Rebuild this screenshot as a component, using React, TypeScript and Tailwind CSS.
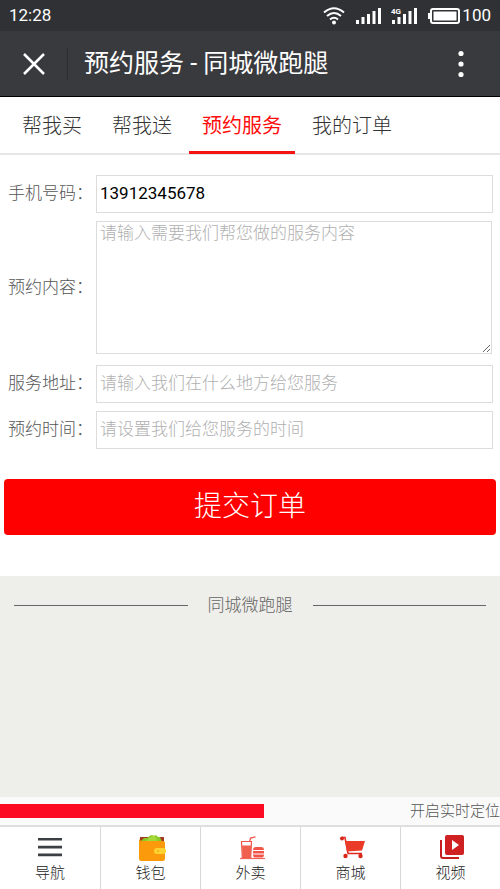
import { useState } from "react";

const tabs = ["帮我买", "帮我送", "预约服务", "我的订单"];

const fieldClass =
  "block min-w-0 flex-1 border border-[#dcdcdc] bg-white px-[3px] text-black outline-none placeholder:font-light placeholder:text-[#b0b0b0]";

const MenuIcon = () => (
  <svg width="30" height="30" viewBox="0 0 30 30" fill="#3c4045">
    <path d="M3 6h24v2.600H3zM3 13.800h24v2.600H3zM3 21.600h24v2.600H3z" />
  </svg>
);

const WalletIcon = () => (
  <svg width="30" height="30" viewBox="0 0 30 30">
    <path d="M4 5h24v6H4z" fill="#a33a22" />
    <path d="M5 9l3-3 3 0 4-3 3 1 2-1 2 2 2 0 2 5z" fill="#8ac926" />
    <path d="M10 9l7-6 3 2 1 4z" fill="#a5d93a" />
    <path d="M3 6q0 3 4 3h20q2 0 2 2v15q0 3-2 3H5q-2 0-2-3z" fill="#fb9a0a" />
    <rect x="18" y="16" width="12" height="6" rx="3" fill="#fdd331" />
    <circle cx="22" cy="19" r="1.200" fill="#f4b71b" />
  </svg>
);

const TakeoutIcon = () => (
  <svg width="30" height="30" viewBox="0 0 30 30" fill="none">
    <path d="M12.500 14l2-8 5-1.200" stroke="#f2564a" strokeWidth="1.300" />
    <path d="M5.500 9.500h10l-.8 16H6.300z" fill="#fff" stroke="#f2564a" strokeWidth="1.200" />
    <path d="M6 13.500h9.300l-.6 12H6.500z" fill="#f0604f" />
    <path d="M17 18q0-3 3-3h5q3 0 3 3zM17 19h11v2.500H17zM17 22.500h11q0 3-2 3h-7q-2 0-2-3z" fill="#f2564a" />
    <path d="M4 26.500h25" stroke="#f2665a" strokeWidth="1.200" />
  </svg>
);

const CartIcon = () => (
  <svg width="30" height="30" viewBox="0 0 30 30">
    <circle cx="6" cy="6.500" r="2" fill="#d9271b" />
    <path d="M6 5.500h3l3 16h14" fill="none" stroke="#e0281c" strokeWidth="1.500" />
    <path d="M9 9h20l-3 9.500-15 1z" fill="#ea3a28" />
    <circle cx="9.500" cy="24" r="2.200" fill="#d9271b" />
    <circle cx="24.500" cy="24" r="2.200" fill="#d9271b" />
  </svg>
);

const VideoIcon = () => (
  <svg width="30" height="30" viewBox="0 0 30 30">
    <path d="M5 8v16q0 2 2 2h16" fill="none" stroke="#c81d1f" strokeWidth="2" />
    <rect x="9" y="3" width="19" height="20" rx="2" fill="#cf2022" />
    <path d="M16 8l7 5-7 5z" fill="#fff" />
  </svg>
);

const navItems = [
  { label: "导航", icon: MenuIcon },
  { label: "钱包", icon: WalletIcon },
  { label: "外卖", icon: TakeoutIcon },
  { label: "商城", icon: CartIcon },
  { label: "视频", icon: VideoIcon },
];

const SignalBars = ({ network }: { network?: string }) => (
  <svg width="27" height="20" viewBox="0 0 27 20" fill="#fff">
    <rect x="1" y="14" width="3" height="4" />
    <rect x="6.500" y="11" width="3" height="7" />
    <rect x="12" y="8" width="3" height="10" />
    <rect x="17.500" y="5" width="3" height="13" />
    <rect x="23" y="2" width="3" height="16" />
    {network && (
      <text x="0" y="8" fontSize="8" fontWeight="700" fontFamily="Roboto">
        {network}
      </text>
    )}
  </svg>
);

const StatusBar = () => (
  <div className="flex h-[31px] items-center justify-between bg-[#303135] pr-[9px] pl-[9px] text-[17px] text-white">
    <span>12:28</span>
    <div className="flex items-center">
      <svg width="22" height="20" viewBox="0 0 22 20" fill="none" stroke="#fff" strokeWidth="2">
        <path d="M1 6.500q10-8.500 20 0M4 10q7-6 14 0M7 13.500q4-3.500 8 0" />
        <circle cx="11" cy="16.500" r="1" fill="#fff" />
      </svg>
      <span className="ml-[10px]">
        <SignalBars />
      </span>
      <span className="ml-[9px]">
        <SignalBars network="4G" />
      </span>
      <svg className="ml-[10px]" width="34" height="18" viewBox="0 0 34 18">
        <path d="M0 6h3v6H0z" fill="#fff" />
        <rect x="3" y="2" width="28" height="14" rx="2" fill="none" stroke="#fff" strokeWidth="2" />
        <rect x="5.500" y="4.500" width="23" height="9" fill="#fff" />
      </svg>
      <span>100</span>
    </div>
  </div>
);

const Header = () => (
  <header className="flex h-[66px] items-center border-b border-black bg-[#393a3e] text-white">
    <button aria-label="关闭" className="flex w-[67px] justify-center">
      <svg width="24" height="24" viewBox="0 0 24 24" stroke="#fff" strokeWidth="2.500">
        <path d="M2 2l20 20M22 2L2 22" />
      </svg>
    </button>
    <div className="h-8 w-px bg-[#2c2d30]" />
    <h1 className="ml-4 flex-1 text-[25px] leading-8">预约服务 - 同城微跑腿</h1>
    <button aria-label="更多" className="mr-[23px] flex w-8 justify-center">
      <svg width="6" height="28" viewBox="0 0 6 28" fill="#fff">
        <circle cx="3" cy="3.500" r="2.600" />
        <circle cx="3" cy="14" r="2.600" />
        <circle cx="3" cy="24.500" r="2.600" />
      </svg>
    </button>
  </header>
);

export default function App() {
  const [active, setActive] = useState("预约服务");
  const [phone, setPhone] = useState("13912345678");

  return (
    <div className="flex min-h-screen flex-col bg-[#eeeeea] font-['Roboto','Noto_Sans_CJK_SC',sans-serif]">
      <StatusBar />
      <Header />

      <nav className="flex h-[58px] gap-1 border-b-2 border-[#e6e6e6] bg-white pl-[9px]">
        {tabs.map((tab) => (
          <button
            key={tab}
            onClick={() => setActive(tab)}
            className={`h-[57px] border-b-[3px] px-[13px] pt-1 text-[20px] ${
              tab === active
                ? "border-[#f51414] font-normal text-[#ff0c0c]"
                : "border-transparent font-light text-[#333]"
            }`}
          >
            {tab}
          </button>
        ))}
      </nav>

      <main className="bg-white pt-5 pb-[41px]">
        <form onSubmit={(e) => e.preventDefault()}>
          <div className="flex flex-col gap-2 pr-[7px] pl-2 text-[17px] text-[#555]">
            <div className="flex items-center">
              <label htmlFor="phone" className="w-[88px] font-light">手机号码：</label>
              <input
                id="phone"
                type="tel"
                value={phone}
                onChange={(e) => setPhone(e.target.value)}
                className={`${fieldClass} h-[38px] pb-[2px]`}
              />
            </div>
            <div className="flex items-center">
              <label htmlFor="content" className="w-[88px] font-light">预约内容：</label>
              <textarea
                id="content"
                placeholder="请输入需要我们帮您做的服务内容"
                className={`${fieldClass} mr-px h-[133px] resize leading-[22px]`}
              />
            </div>
            <div className="mt-[3px] flex items-center">
              <label htmlFor="address" className="w-[88px] font-light">服务地址：</label>
              <input
                id="address"
                placeholder="请输入我们在什么地方给您服务"
                className={`${fieldClass} h-[38px] pb-[2px]`}
              />
            </div>
            <div className="flex items-center">
              <label htmlFor="time" className="w-[88px] font-light">预约时间：</label>
              <input
                id="time"
                placeholder="请设置我们给您服务的时间"
                className={`${fieldClass} h-[38px] pb-[2px]`}
              />
            </div>
          </div>
          <div className="px-1 pt-[30px]">
            <button className="h-14 w-full rounded-[4px] bg-[#fe0000] text-[28px] font-light text-white">
              提交订单
            </button>
          </div>
        </form>
      </main>

      <div className="flex items-center gap-5 px-[14px] pt-[17px]">
        <div className="h-px flex-1 bg-[#666]" />
        <span className="text-[17px] leading-6 font-light text-[#666]">同城微跑腿</span>
        <div className="h-px flex-1 bg-[#666]" />
      </div>

      <footer className="mt-auto">
        <div className="flex h-7 items-center justify-between bg-[#fafafa]">
          <div className="h-[14px] w-[264px] bg-[#fc0a24]" />
          <a href="#location" className="text-[15px] font-light text-[#555]">开启实时定位</a>
        </div>
        <nav className="grid h-16 grid-cols-5 border-t-2 border-[#dedede] bg-white">
          {navItems.map(({ label, icon: Icon }) => (
            <a
              key={label}
              href="#nav"
              className="flex flex-col items-center border-l border-[#d8d8d8] pt-[5px] text-[15px] leading-[22px] font-light text-[#222] first:border-l-0"
            >
              <Icon />
              <span>{label}</span>
            </a>
          ))}
        </nav>
      </footer>
    </div>
  );
}
